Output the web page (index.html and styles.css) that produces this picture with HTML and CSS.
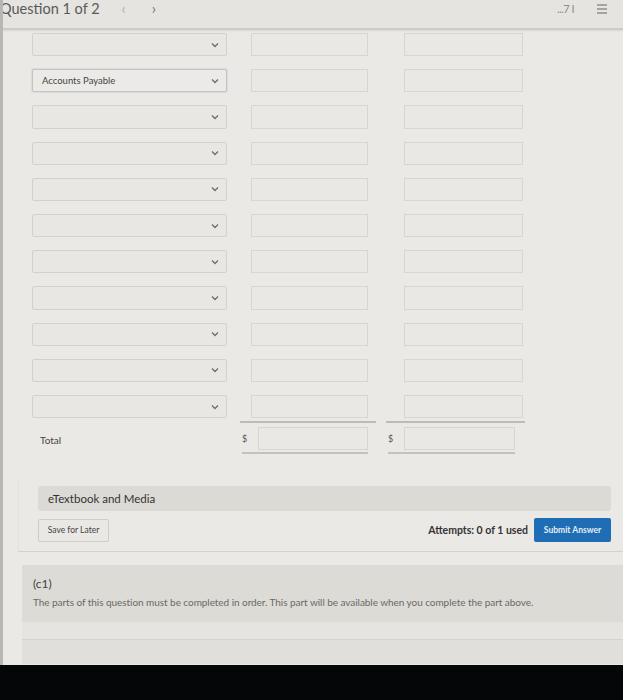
FILE: index.html
```html
<!DOCTYPE html>
<html>
<head>
<meta charset="utf-8">
<link rel="stylesheet" href="styles.css">
</head>
<body>
<div class="screen">
  <header class="topbar">
    <div class="title">Question 1 of 2</div>
    <div class="nav"><span class="prev">&lsaquo;</span><span class="next">&rsaquo;</span></div>
    <div class="spacer"></div>
    <div class="score">...7 I</div>
    <svg class="listicon" width="12" height="12" viewBox="0 0 12 12"><g stroke="#8a8986" stroke-width="1.4"><line x1="1" y1="2" x2="11" y2="2"/><line x1="1" y1="6" x2="11" y2="6"/><line x1="1" y1="10" x2="11" y2="10"/></g></svg>
  </header>
  <main class="content">
    <div class="grid" id="grid"></div>
    <div class="sumlines"><div class="sl sl1"></div><div class="sl sl2"></div></div>
    <div class="totalrow">
      <div class="totallabel">Total</div>
      <div class="tcell c2"><span class="dollar">$</span><div class="tbox"></div></div>
      <div class="tcell c3"><span class="dollar">$</span><div class="tbox"></div></div>
    </div>
    <section class="card">
      <div class="media">eTextbook and Media</div>
      <div class="actions">
        <button class="save">Save for Later</button>
        <div class="spacer"></div>
        <div class="attempts">Attempts: 0 of 1 used</div>
        <button class="submit">Submit Answer</button>
      </div>
    </section>
    <section class="part">
      <div class="partlabel">(c1)</div>
      <div class="parttext">The parts of this question must be completed in order. This part will be available when you complete the part above.</div>
    </section>
    <div class="band band1"></div>
    <div class="band band2"></div>
  </main>
</div>
<div class="black"></div>
<script>
  var g = document.getElementById('grid');
  for (var i = 0; i < 11; i++) {
    var r = document.createElement('div');
    r.className = 'row';
    r.innerHTML = '<div class="sel' + (i === 1 ? ' filled' : '') + '"><span class="seltext">' + (i === 1 ? 'Accounts Payable' : '') + '</span><svg class="chev" width="8" height="6" viewBox="0 0 8 6"><polyline points="1,1.5 4,4.5 7,1.5" fill="none" stroke="#6e6d6a" stroke-width="1.3"/></svg></div><div class="box b2"></div><div class="box b3"></div>';
    g.appendChild(r);
  }
</script>
</body>
</html>
```

FILE: styles.css
```css
* { box-sizing: border-box; }
html, body { margin: 0; padding: 0; }
body {
  width: 623px;
  height: 700px;
  overflow: hidden;
  background: #e9e7e3;
  font-family: Lato, "Open Sans", sans-serif;
  color: #333;
}
.screen {
  height: 665px;
  overflow: hidden;
  border-left: 3px solid #b9b7b3;
  background: #ebe9e5;
}
.topbar {
  height: 30px;
  display: flex;
  align-items: flex-start;
  background: #e5e4e1;
  border-bottom: 2px solid #cdcbc7;
  box-shadow: 0 1px 2px rgba(0,0,0,0.08);
  margin-left: -3px;
}
.title {
  font-size: 14.5px;
  color: #5a5956;
  margin-left: 0;
  line-height: 17px;
}
.nav { display: flex; margin-left: 22px; font-size: 15px; line-height: 17px; }
.prev { color: #b0afac; }
.next { color: #77716e; margin-left: 26px; }
.spacer { flex: 1; }
.score { font-size: 11px; color: #8f8e8b; margin-top: 2px; margin-right: 22px; letter-spacing: -0.5px; line-height: 14px; }
.listicon { margin-top: 3px; margin-right: 15px; }

.content { padding: 3px 0 0 0; }
.grid { display: flex; flex-direction: column; gap: 12.9px; }
.row {
  display: flex;
  height: 23.3px;
  padding-left: 29px;
}
.sel {
  width: 195px;
  border: 1px solid #d3d1cd;
  background: #e9e7e3;
  border-radius: 2px;
  display: flex;
  align-items: center;
  padding: 0 7px 0 9px;
}
.sel.filled { border-color: #c5c4c3; box-shadow: 0 0 1px 1px #d8dbe0; background: #eceae6; }
.seltext { flex: 1; font-size: 9.5px; color: #444; }
.chev { flex: none; }
.box { border: 1px solid #d8d6d2; background: #eae8e4; }
.b2 { width: 117px; margin-left: 24px; }
.b3 { width: 119px; margin-left: 36px; }

.sumlines { display: flex; margin-top: 3px; height: 2px; padding-left: 237px; }
.sl { height: 1.5px; background: #bdbbb7; }
.sl1 { width: 136px; }
.sl2 { width: 139px; margin-left: 10px; }

.totalrow { display: flex; align-items: center; height: 30px; margin-top: 2px; }
.totallabel { width: 239px; padding-left: 37px; font-size: 10px; color: #444; }
.tcell { display: flex; align-items: center; border-bottom: 2px solid #c4c2be; height: 27px; padding-bottom: 2px; }
.tcell.c2 { width: 126px; }
.tcell.c3 { width: 127px; margin-left: 20px; }
.dollar { font-size: 9px; color: #555; width: 16px; }
.tbox { flex: 1; height: 23px; border: 1px solid #d8d6d2; background: #eae8e4; }

.card {
  margin: 25px 0 0 15px;
  padding: 6px 12px 8px 19px;
  border-bottom: 1px solid #d4d2ce;
  border-left: 1px solid #e3e1dd;
  height: 72px;
}
.media {
  height: 25px;
  background: #dcdad5;
  border-radius: 3px;
  font-size: 11.5px;
  color: #333;
  display: flex;
  align-items: center;
  padding-left: 10px;
}
.actions { display: flex; align-items: center; margin-top: 7px; }
.save {
  height: 23px;
  width: 71px;
  padding: 0;
  font-family: inherit;
  font-size: 8.5px;
  color: #444;
  background: #eae8e4;
  border: 1px solid #cfcdc9;
  border-radius: 2px;
}
.attempts { font-size: 10.5px; font-weight: bold; color: #333; margin-right: 6px; }
.submit {
  height: 24px;
  width: 77px;
  padding: 0;
  font-family: inherit;
  font-size: 8.5px;
  font-weight: bold;
  color: #e8eef6;
  background: #1f6db4;
  border: none;
  border-radius: 2px;
}

.part {
  margin: 13px 0 0 19px;
  height: 57px;
  background: #dddbd6;
  padding: 12px 0 0 11px;
}
.partlabel { font-size: 12px; color: #444; line-height: 14px; }
.parttext { font-size: 10px; color: #6a6966; margin-top: 5px; letter-spacing: -0.05px; }
.band { margin-left: 19px; }
.band1 { height: 18px; background: #e6e4e0; border-bottom: 1px solid #d5d3cf; }
.band2 { height: 24px; background: #e1dfdb; }
.black { height: 35px; background: #050608; }
```
